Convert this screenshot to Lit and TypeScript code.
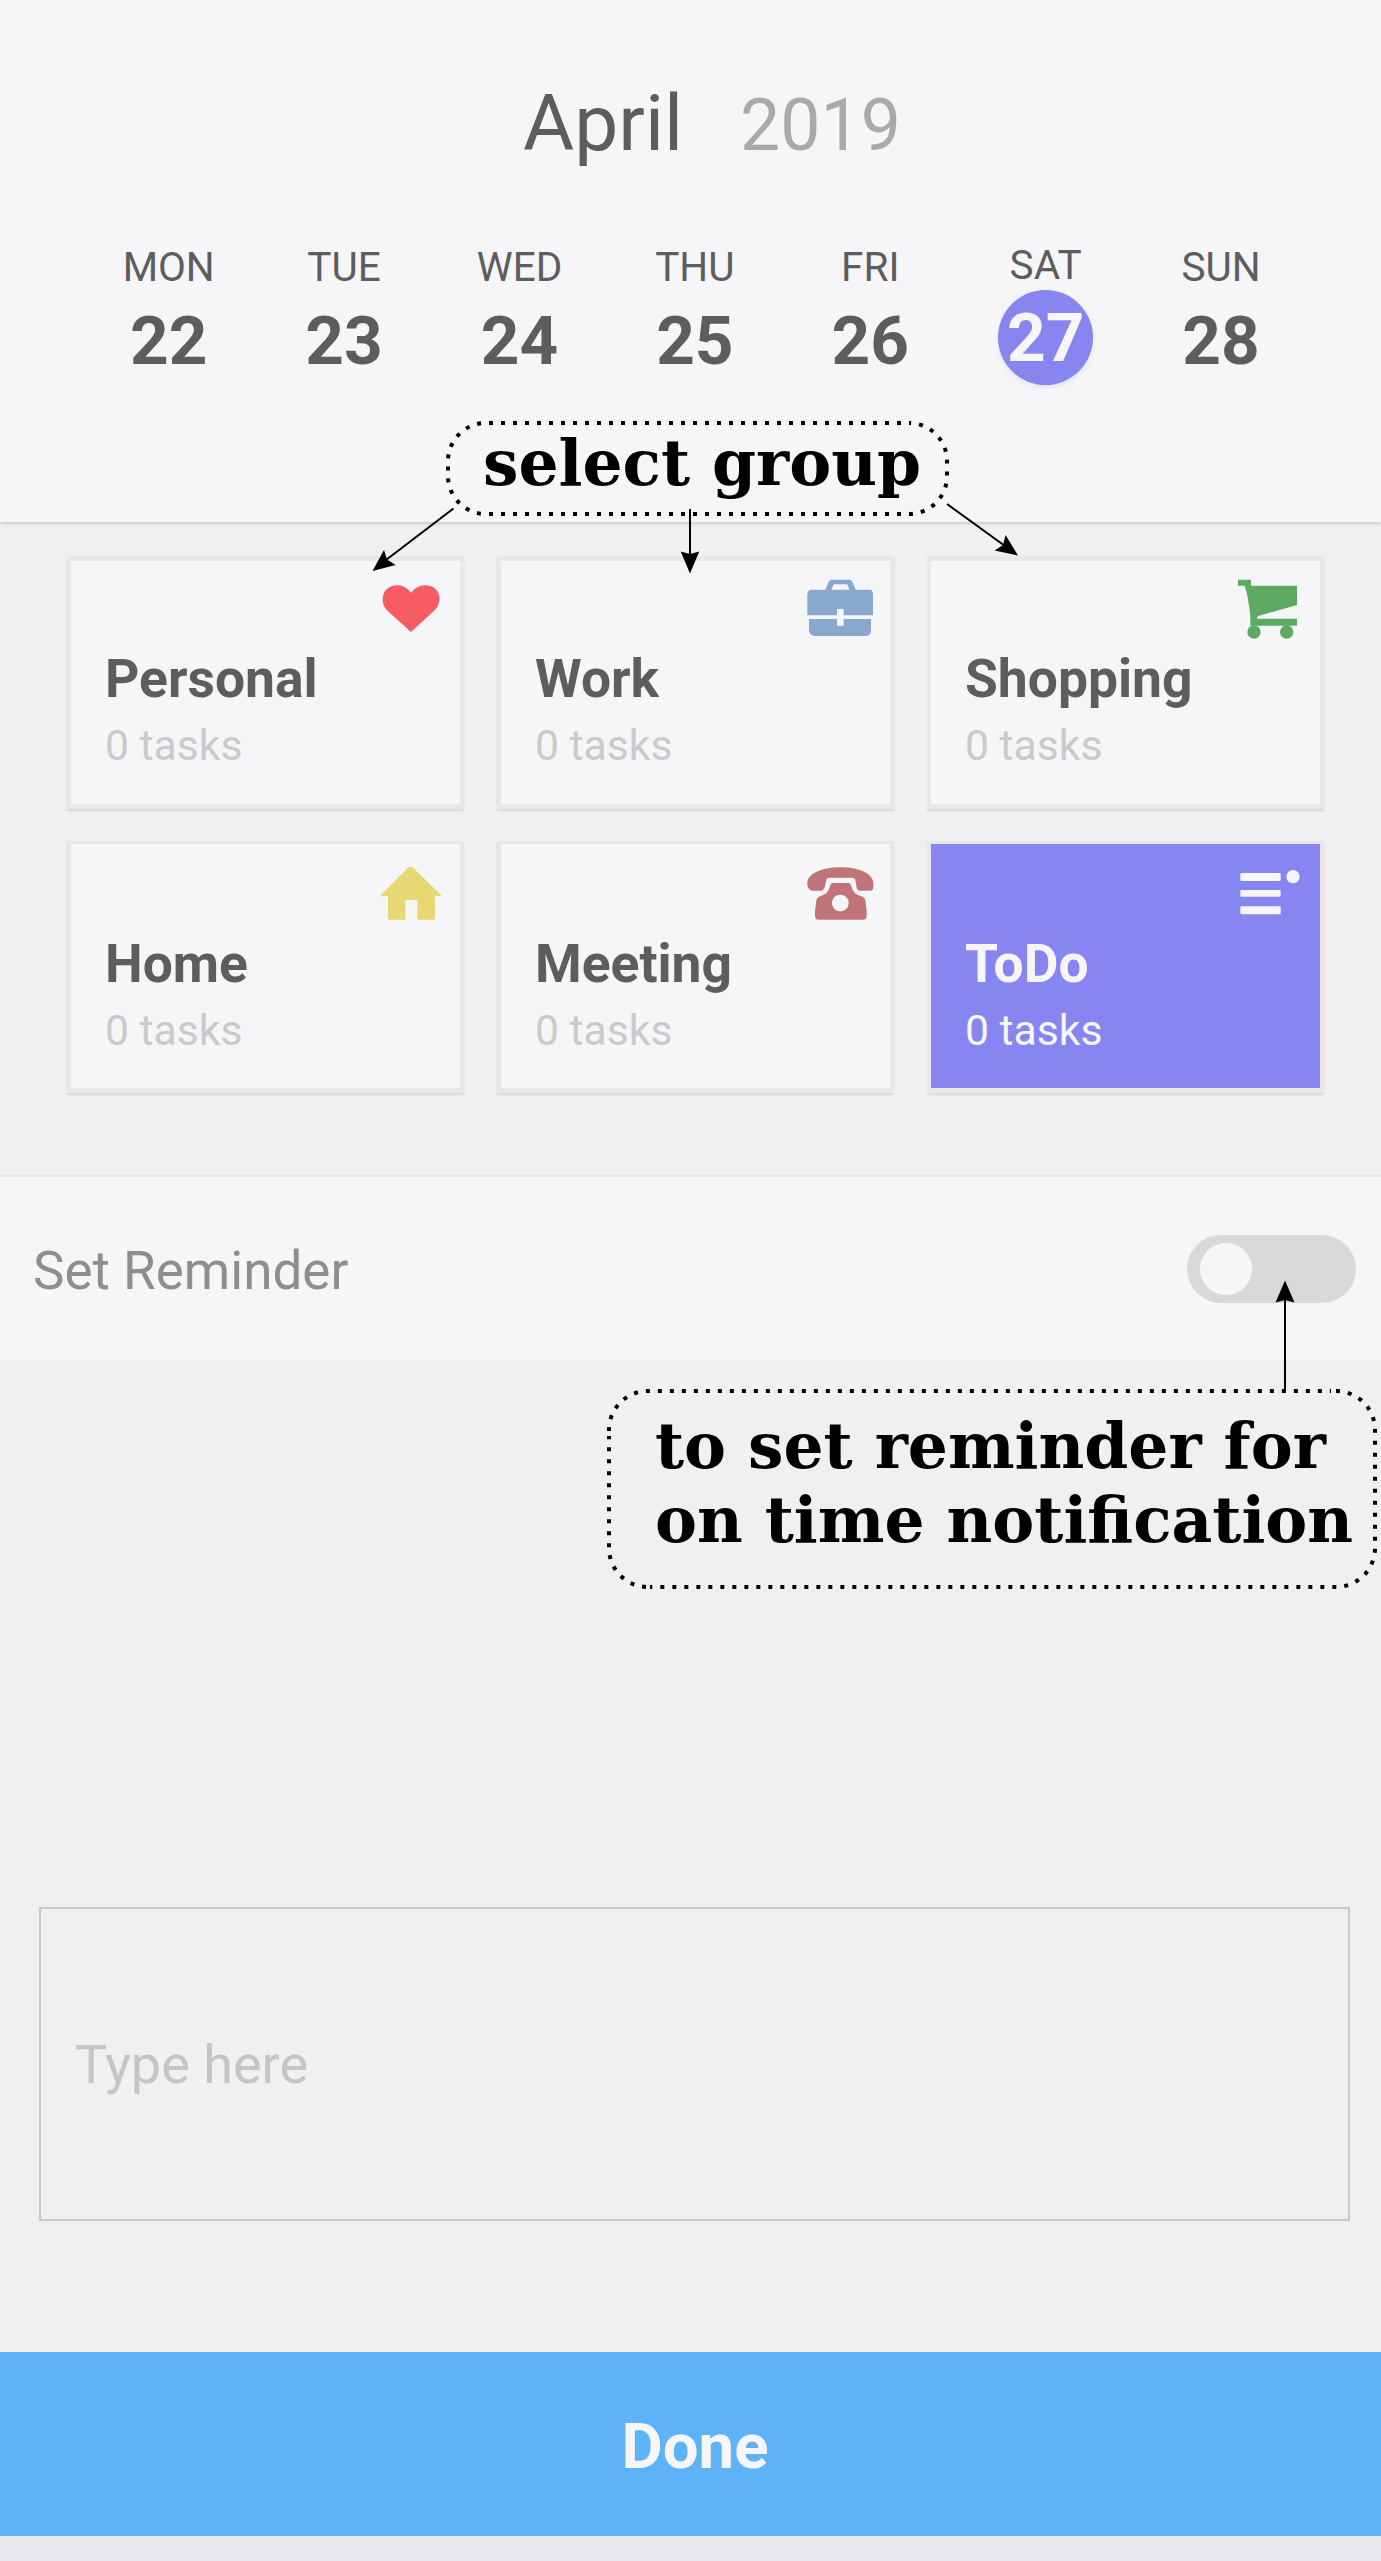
import { LitElement, html, css, svg } from "lit";
import { customElement } from "lit/decorators.js";
import { classMap } from "lit/directives/class-map.js";

const icons = {
  heart: svg`<path fill="#f75c62" d="M123 177 L53 114 C27 90 34 37 83 37 Q107 38 123 59 Q140 38 164 37 C213 37 219 88 194 112 Z"/>`,
  briefcase: svg`<g fill="#88a9cd">
    <path fill-rule="evenodd" d="M76 50 L86 26 Q89 20 96 20 H148 Q154 20 157 26 L167 50 H209 Q219 50 219 66 V127 H131 V108 H111 V127 H22 V66 Q23 50 33 50 Z M94 50 H148 L143 37 Q142 34 139 34 H104 Q101 34 100 37 Z"/>
    <path d="M27 138 H111 V158 H131 V138 H213 V172 Q212 189 198 189 H44 Q29 189 27 172 Z"/></g>`,
  cart: svg`<g fill="#5faa62"><path d="M24 20 H63 V38 H201 V96 L85 129 Q81 131 81 137 H201 V158 H61 V130 Q55 70 44 38 H24 Z"/>
    <circle cx="72" cy="177" r="20"/><circle cx="170" cy="177" r="20"/></g>`,
  home: svg`<path fill="#e8d874" d="M115 34 Q121 30 128 34 L213 117 Q214 121 209 121 H195 V186 Q195 191 190 191 H142 V132 H106 V191 H59 Q54 191 54 186 V121 H35 Q30 121 32 117 Z"/>`,
  phone: svg`<g fill="#c07478"><path d="M22 80 C25 50 70 34 121 34 C172 34 217 50 220 80 V95 Q219 104 210 104 H179 Q172 104 170 96 L166 72 Q164 65 156 65 H88 Q80 65 79 72 L74 94 Q70 104 64 104 H36 Q27 104 22 88 Z"/>
    <path fill-rule="evenodd" d="M99 81 H145 Q151 81 153 88 L158 101 Q162 111 172 116 L188 122 Q195 125 196 133 L200 165 V180 Q200 191 190 191 H56 Q45 191 45 180 V165 L49 133 Q50 125 57 122 L71 116 Q82 112 86 101 L91 88 Q93 81 99 81 Z M121 116 a25 25 0 1 0 .1 0 Z"/></g>`,
  list: svg`<g fill="#f6f6f9"><rect x="31" y="51" width="121" height="24" rx="4"/><rect x="31" y="102" width="121" height="20" rx="3"/>
    <rect x="31" y="151" width="121" height="24" rx="4"/><circle cx="189" cy="62" r="20"/></g>`,
};

const days = [
  ["MON", 22], ["TUE", 23], ["WED", 24], ["THU", 25], ["FRI", 26], ["SAT", 27], ["SUN", 28],
] as const;

const groups = [
  { name: "Personal", icon: icons.heart },
  { name: "Work", icon: icons.briefcase },
  { name: "Shopping", icon: icons.cart },
  { name: "Home", icon: icons.home },
  { name: "Meeting", icon: icons.phone },
  { name: "ToDo", icon: icons.list },
];

@customElement("app-root")
export class AppRoot extends LitElement {
  static styles = css`
    :host {
      display: flex;
      flex-direction: column;
      position: relative;
      width: 1381px;
      height: 2561px;
      overflow: hidden;
      background: #f0f0f3;
      color: #5d5d60;
      font-family: Roboto, "Liberation Sans", sans-serif;
    }
    * { box-sizing: border-box; }
    .header {
      flex: none;
      height: 522px;
      padding-top: 73px;
      background: #f6f6f9;
      box-shadow: 0 1px 4px rgba(0, 0, 0, 0.22);
    }
    .title {
      display: flex;
      align-items: baseline;
      gap: 57px;
      height: 103px;
      padding-left: 523px;
      line-height: 100px;
      white-space: nowrap;
    }
    .month { font-size: 78.5px; }
    .year { font-size: 71.5px; color: #aaaaac; }
    .week {
      display: grid;
      grid-template-columns: repeat(7, 175.4px);
      justify-content: start;
      padding: 67px 0 0 81px;
    }
    .day {
      display: flex;
      flex-direction: column;
      align-items: center;
      gap: 2.6px;
    }
    .label { font-size: 40.5px; line-height: 48px; }
    .num {
      width: 95px;
      height: 95px;
      border-radius: 50%;
      font-size: 67.5px;
      font-weight: 700;
      line-height: 93px;
      text-align: center;
    }
    .day.on { gap: 1px; margin-top: -2px; }
    .day.on .num {
      background: #8785ef;
      color: #f6f6f9;
      line-height: 96px;
      box-shadow: 0 2px 5px rgba(0, 0, 0, 0.08);
    }
    .groups {
      flex: none;
      display: grid;
      grid-template-columns: repeat(3, 397px);
      grid-template-rows: 253px 252px;
      gap: 32px 33px;
      height: 653px;
      padding: 34px 0 0 67px;
    }
    .card {
      display: flex;
      flex-direction: column;
      border: 4.5px solid #e8e8ea;
      border-top-width: 5px;
      border-bottom-width: 5px;
      background: #f6f6f9;
      box-shadow: 0 2px 2px rgba(0, 0, 0, 0.1);
    }
    .card:nth-child(n + 4) { border-top-width: 3px; }
    .card:nth-child(n + 4) .icon { margin-bottom: 8px; }
    .icon {
      flex: none;
      align-self: flex-end;
      width: 80px;
      height: 70px;
      margin: 12px 10px 6px 0;
    }
    .name { padding-left: 34px; font-size: 53.4px; font-weight: 700; line-height: 60px; }
    .count { padding: 11px 0 0 34px; font-size: 42.7px; line-height: 50px; color: #cdc8cc; }
    .card.on { background: #8785ef; background-clip: padding-box; }
    .card.on .name, .card.on .count { color: #f6f6f9; }
    .reminder {
      flex: none;
      display: flex;
      align-items: center;
      justify-content: space-between;
      height: 185px;
      padding: 0 25px 0 33px;
      border-top: 2px solid #e8e8ea;
      background: #f6f6f9;
      color: #8e8e90;
      font-size: 53px;
    }
    .caption { padding-top: 4px; }
    .toggle {
      width: 169px;
      height: 68px;
      padding: 8px 13px;
      border-radius: 34px;
      background: #d9d9db;
    }
    .knob { width: 52px; height: 52px; border-radius: 50%; background: #f6f6f9; }
    .field {
      flex: none;
      display: flex;
      align-items: center;
      width: 1311px;
      height: 314px;
      margin: 547px 0 0 39px;
      padding: 1px 0 0 34px;
      border: 2px solid #c8c8ca;
      color: #c5c5c8;
      font-size: 54px;
    }
    .done {
      flex: none;
      display: flex;
      align-items: center;
      justify-content: center;
      height: 184px;
      margin-top: 131px;
      padding: 5px 0 0 9px;
      background: #5db3f5;
      color: #f6f6f9;
      font-size: 63.5px;
      font-weight: 700;
    }
    .footer { flex: 1; background: #e9e8ee; }
    .overlay { position: absolute; left: 0; top: 0; width: 1381px; height: 2561px; }
    .note {
      position: absolute;
      color: #000;
      font: 700 63px/74px "DejaVu Serif", serif;
      white-space: nowrap;
    }
    .note-group { left: 483px; top: 426px; }
    .note-reminder { left: 655px; top: 1409px; }
  `;

  render() {
    return html`
      <div class="header">
        <div class="title"><span class="month">April</span><span class="year">2019</span></div>
        <div class="week">
          ${days.map(([d, n]) => html`<div class=${classMap({ day: true, on: n === 27 })}>
            <span class="label">${d}</span><span class="num">${n}</span>
          </div>`)}
        </div>
      </div>
      <div class="groups">
        ${groups.map((g) => html`<div class=${classMap({ card: true, on: g.name === "ToDo" })}>
          <svg class="icon" viewBox="0 0 240 210">${g.icon}</svg>
          <span class="name">${g.name}</span><span class="count">0 tasks</span>
        </div>`)}
      </div>
      <div class="reminder"><span class="caption">Set Reminder</span><div class="toggle"><div class="knob"></div></div></div>
      <div class="field">Type here</div>
      <div class="done">Done</div>
      <div class="footer"></div>
      <svg class="overlay" viewBox="0 0 1381 2561">
        <g fill="none" stroke="#000" stroke-width="4" stroke-dasharray="4 8">
          <path d="M489 514 H909 A38 38 0 0 0 947 476 V461 A38 38 0 0 0 909 423"/>
          <path d="M901 423 H486 A38 38 0 0 0 448 461 V476 A38 38 0 0 0 486 514"/>
          <path d="M1336 1391 A39 39 0 0 1 1375 1430 V1548 A39 39 0 0 1 1336 1587 H650"/>
          <path d="M646 1587 A39 39 0 0 1 609 1548 V1436"/>
          <path d="M609 1431 A39 39 0 0 1 648 1391 H1331"/>
        </g>
        <g stroke="#000" stroke-width="2">
          <path d="M453.5 508.5 L386 560"/><path d="M690 509 V555"/>
          <path d="M947 504 L1005 546"/><path d="M1285 1391 V1300"/>
        </g>
        <path d="M372.5 571 L384 550 L387 559.5 L395.7 565 Z"/>
        <path d="M690 573.5 L680.7 551.5 L690 554 L699.3 551.5 Z"/>
        <path d="M1018 555.5 L994.6 550.5 L1003 545 L1005.6 535 Z"/>
        <path d="M1285 1280.5 L1275.5 1302.5 L1285 1300 L1294.5 1302.5 Z"/>
      </svg>
      <div class="note note-group">select group</div>
      <div class="note note-reminder">to set reminder for<br />on time notification</div>
    `;
  }
}
